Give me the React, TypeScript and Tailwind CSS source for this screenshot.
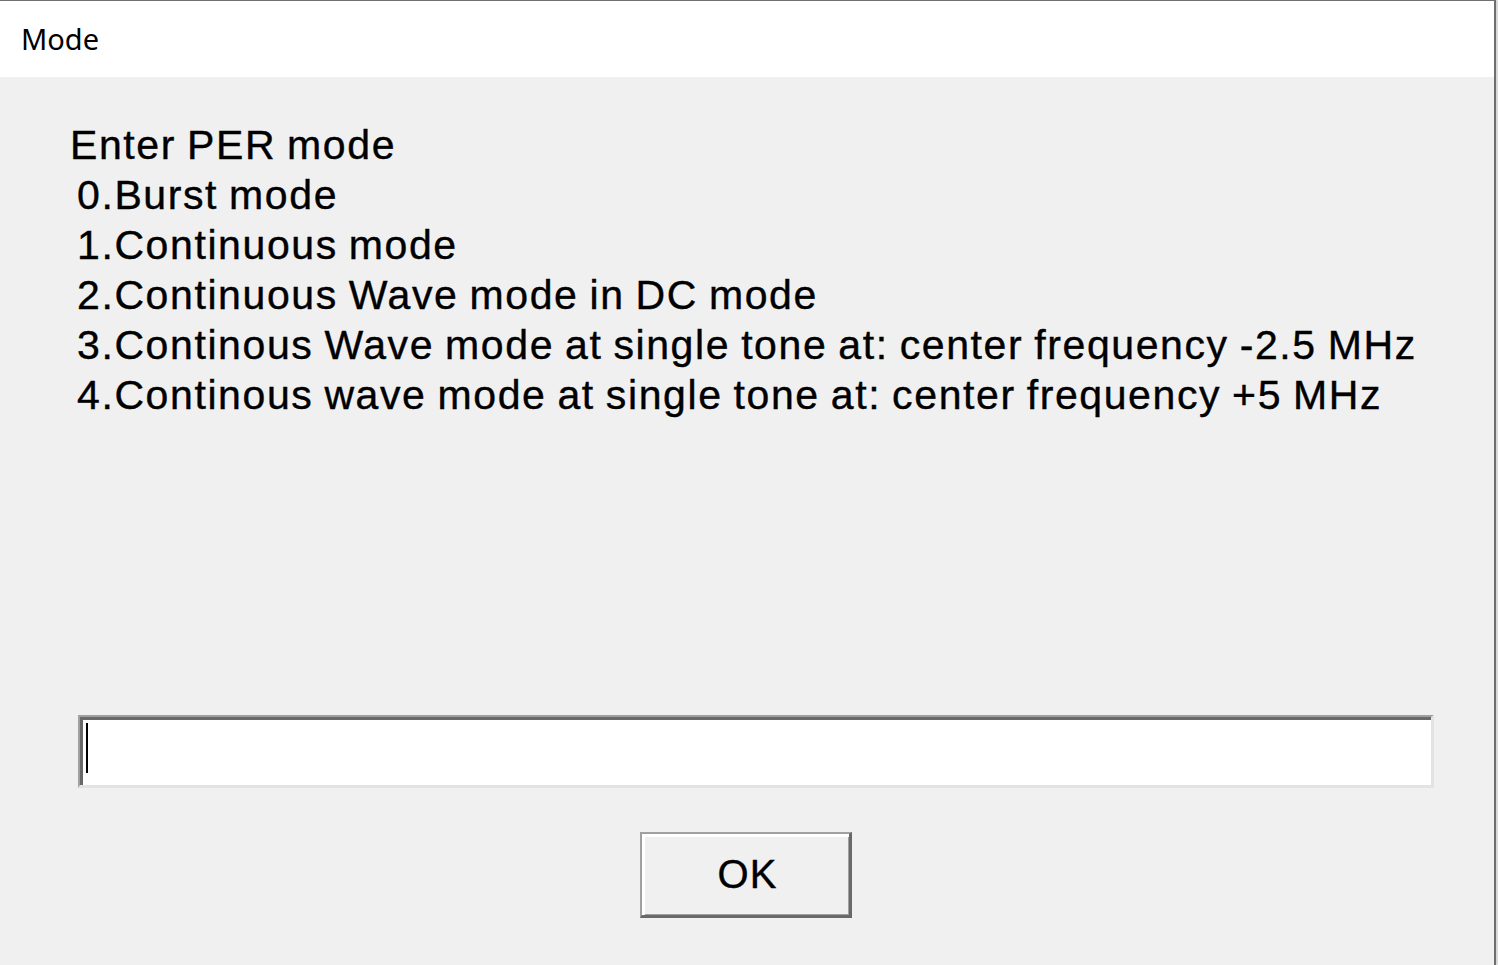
import React from "react";

const lines = [
  "0.Burst mode",
  "1.Continuous mode",
  "2.Continuous Wave mode in DC mode",
  "3.Continous Wave mode at single tone at: center frequency -2.5 MHz",
  "4.Continous wave mode at single tone at: center frequency +5 MHz",
];

export default function App() {
  return (
    <div className="w-[1498px] h-[965px] bg-[#f0f0f0] overflow-hidden">
      <div className="w-[1496px] h-[965px] flex flex-col border-t border-t-[#707070] border-r-2 border-r-[#6e6e6e] bg-[#f0f0f0] shadow-[2px_0_2px_rgba(0,0,0,0.12)]">
        <div className="h-[76px] bg-white flex items-center pl-[21px] pb-[2px] shrink-0">
          <span className="text-[29px] text-black leading-none" style={{ fontFamily: '"Noto Sans", "Open Sans", sans-serif' }}>
            Mode
          </span>
        </div>
        <div className="flex-1 flex flex-col pl-[70px] pt-[43px]" style={{ fontFamily: '"Liberation Sans", Arial, sans-serif' }}>
          <div className="text-[41px] leading-[50px] text-black tracking-[1.6px] [word-spacing:-2px] [-webkit-text-stroke:0.4px_black] whitespace-pre">
            <div>Enter PER mode</div>
            {lines.map((l) => (
              <div key={l} className="pl-[7px]">
                {l}
              </div>
            ))}
          </div>
          <div className="mt-[295px] ml-[8px] w-[1356px] h-[73px] bg-white border-t-[2px] border-l-[2px] border-t-[#a0a0a0] border-l-[#a0a0a0] border-b-[3px] border-r-[3px] border-b-[#e3e3e3] border-r-[#e3e3e3] shadow-[inset_3px_3px_0_#696969] flex items-start pl-[6px] pt-[6px]">
            <div className="w-[2px] h-[50px] bg-black" />
          </div>
          <div className="mt-[44px] self-start ml-[570px] w-[212px] h-[86px] bg-[#f0f0f0] border-t-[2px] border-l-[2px] border-t-[#a0a0a0] border-l-[#a0a0a0] border-b-[3px] border-r-[3px] border-b-[#696969] border-r-[#696969] shadow-[inset_3px_3px_0_#ffffff,inset_-1px_-1px_0_#a0a0a0] flex items-center justify-center">
            <span className="text-[40px] leading-none text-black pb-[2px] pl-[4px] tracking-[1px] [-webkit-text-stroke:0.4px_black]">OK</span>
          </div>
        </div>
      </div>
    </div>
  );
}
